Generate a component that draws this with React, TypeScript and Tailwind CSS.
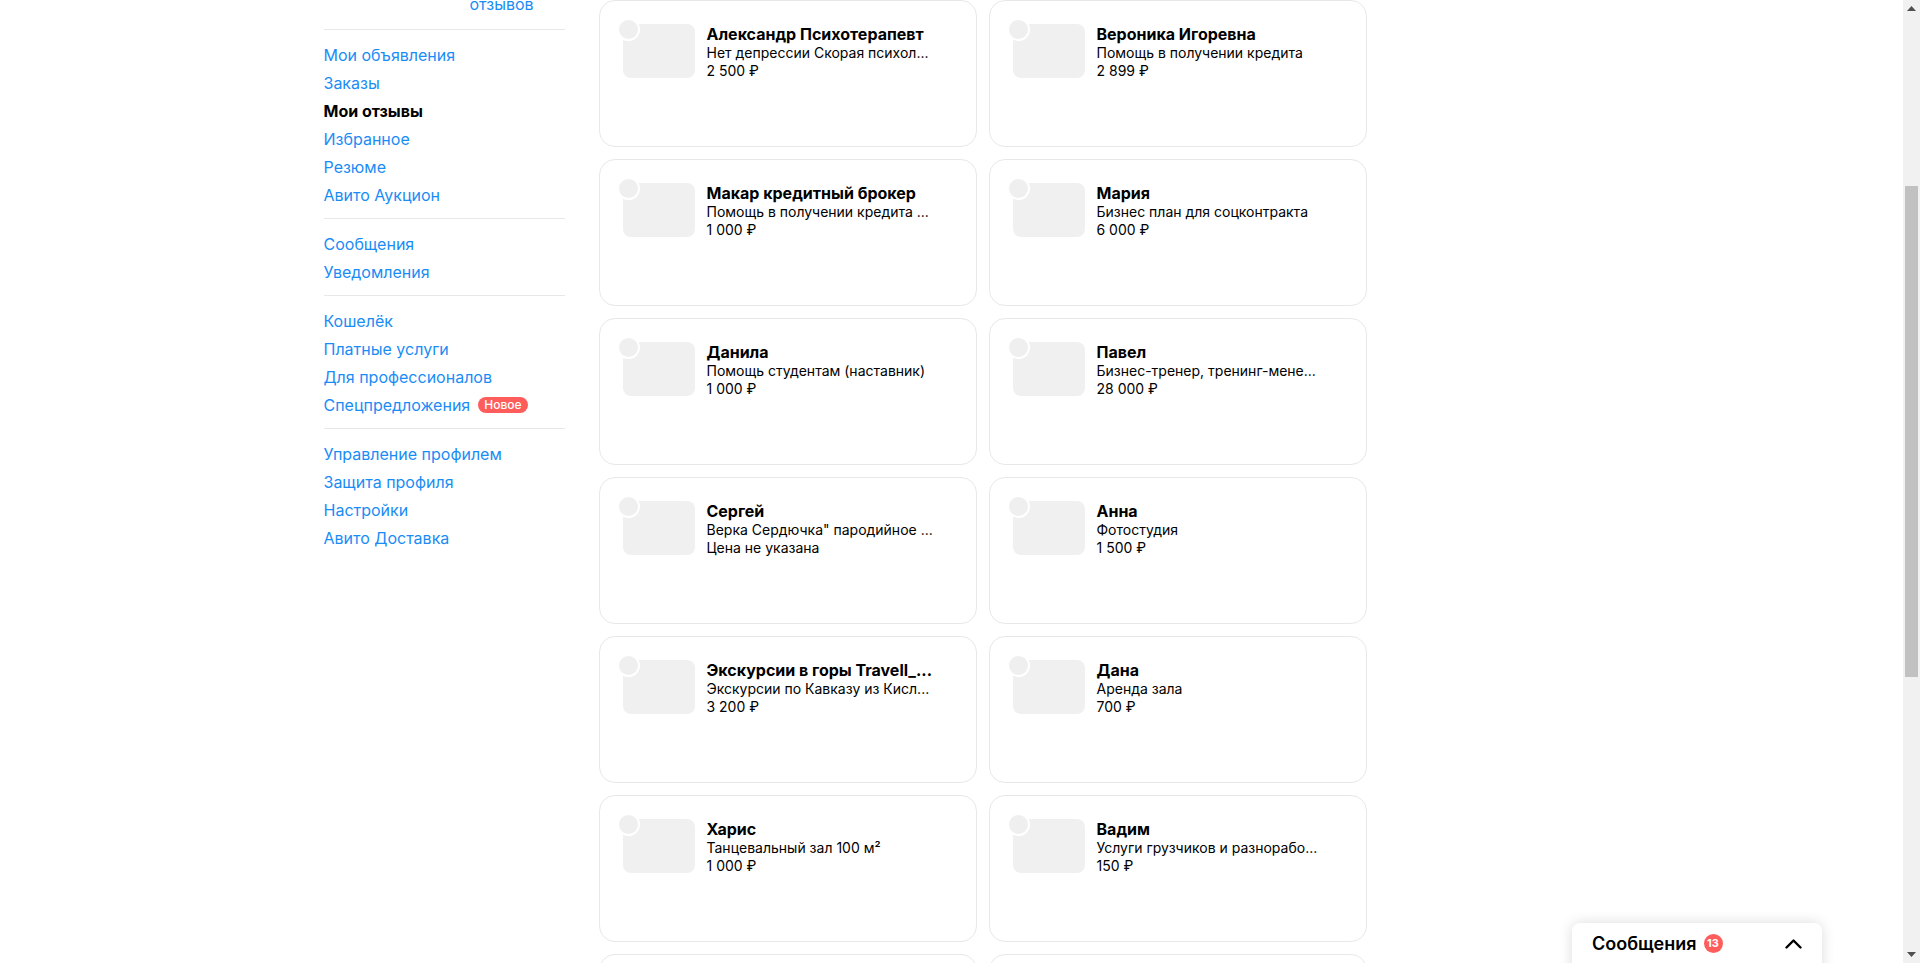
import React from 'react';

type Item = { name: string; desc: string; price: string };

const items: Item[] = [
  { name: 'Александр Психотерапевт', desc: 'Нет депрессии Скорая психол...', price: '2\u00a0500\u00a0₽' },
  { name: 'Вероника Игоревна', desc: 'Помощь в получении кредита', price: '2\u00a0899\u00a0₽' },
  { name: 'Макар кредитный брокер', desc: 'Помощь в получении кредита ...', price: '1\u00a0000\u00a0₽' },
  { name: 'Мария', desc: 'Бизнес план для соцконтракта', price: '6\u00a0000\u00a0₽' },
  { name: 'Данила', desc: 'Помощь студентам (наставник)', price: '1\u00a0000\u00a0₽' },
  { name: 'Павел', desc: 'Бизнес-тренер, тренинг-мене...', price: '28\u00a0000\u00a0₽' },
  { name: 'Сергей', desc: 'Верка Сердючка" пародийное ...', price: 'Цена не указана' },
  { name: 'Анна', desc: 'Фотостудия', price: '1\u00a0500\u00a0₽' },
  { name: 'Экскурсии в горы Travell_...', desc: 'Экскурсии по Кавказу из Кисл...', price: '3\u00a0200\u00a0₽' },
  { name: 'Дана', desc: 'Аренда зала', price: '700\u00a0₽' },
  { name: 'Харис', desc: 'Танцевальный зал 100 м²', price: '1\u00a0000\u00a0₽' },
  { name: 'Вадим', desc: 'Услуги грузчиков и разнорабо...', price: '150\u00a0₽' },
  { name: '', desc: '', price: '' },
  { name: '', desc: '', price: '' },
];

const groups: { label: string; active?: boolean; badge?: string }[][] = [
  [
    { label: 'Мои объявления' },
    { label: 'Заказы' },
    { label: 'Мои отзывы', active: true },
    { label: 'Избранное' },
    { label: 'Резюме' },
    { label: 'Авито Аукцион' },
  ],
  [{ label: 'Сообщения' }, { label: 'Уведомления' }],
  [
    { label: 'Кошелёк' },
    { label: 'Платные услуги' },
    { label: 'Для профессионалов' },
    { label: 'Спецпредложения', badge: 'Новое' },
  ],
  [
    { label: 'Управление профилем' },
    { label: 'Защита профиля' },
    { label: 'Настройки' },
    { label: 'Авито Доставка' },
  ],
];

function Sidebar() {
  return (
    <aside className="w-[241px] shrink-0">
      {/* верх профиля, прокручен за край */}
      <div className="-mt-[6px] flex pb-[15px] text-[16px] leading-5">
        <div className="w-[146px]" />
        <a className="text-[#1a8cf5]">отзывов</a>
      </div>
      {groups.map((g, i) => (
        <div key={i} className="border-t border-[#e8e8e8] pt-[11px] pb-[9px]">
          {g.map((it) => (
            <div key={it.label} className="flex items-center leading-[28px] text-[16px]">
              <span className={it.active ? 'font-bold text-black' : 'text-[#1a8cf5]'}>{it.label}</span>
              {it.badge && (
                <span className="ml-2 rounded-full bg-[#ff5c5c] px-[6px] text-[12px] leading-4 font-medium text-white">
                  {it.badge}
                </span>
              )}
            </div>
          ))}
        </div>
      ))}
    </aside>
  );
}

function Card({ item }: { item: Item }) {
  return (
    <div className="flex h-[147px] gap-3 rounded-[16px] border border-[#e8e8e8] bg-white p-[23px]">
      <div className="relative h-[54px] w-[72px] shrink-0 rounded-[8px] bg-[#f0f0f0]">
        <div className="absolute -left-[6px] -top-[6px] h-[23px] w-[23px] rounded-full border-2 border-white bg-[#efefef]" />
      </div>
      {item.name && (
        <div className="min-w-0 whitespace-nowrap text-black">
          <div className="text-[16px] font-bold leading-5">{item.name}</div>
          <div className="text-[14px] leading-[18px]">{item.desc}</div>
          <div className="text-[14px] leading-[18px]">{item.price}</div>
        </div>
      )}
    </div>
  );
}

function Scrollbar() {
  return (
    <div className="flex h-full w-[17px] shrink-0 flex-col bg-[#f1f1f1]">
      <div className="flex h-[17px] items-center justify-center">
        <svg width="9" height="5" viewBox="0 0 9 5">
          <path d="M0 5 4.5 0 9 5z" fill="#505050" />
        </svg>
      </div>
      <div className="flex-1">
        <div className="mx-[2px] mt-[169px] h-[491px] bg-[#c1c1c1]" />
      </div>
      <div className="flex h-[17px] items-center justify-center">
        <svg width="9" height="5" viewBox="0 0 9 5">
          <path d="M0 0 4.5 5 9 0z" fill="#505050" />
        </svg>
      </div>
    </div>
  );
}

export default function App() {
  return (
    <div className="relative flex h-[963px] w-full overflow-hidden bg-white font-['Inter','Noto_Sans',sans-serif]">
      <main className="flex-1 overflow-hidden">
        <div className="mx-auto flex w-[1256px] items-start">
          <Sidebar />
          <div className="ml-[34px] grid grid-cols-[378px_378px] gap-[12px]">
            {items.map((it, i) => (
              <Card key={i} item={it} />
            ))}
          </div>
        </div>
      </main>
      <Scrollbar />

      {/* плавающее окно сообщений */}
      <div className="absolute left-[1572px] top-[923px] h-[60px] w-[250px] rounded-t-[8px] bg-white shadow-[0_0_14px_rgba(0,0,0,0.14)]">
        <div className="flex h-[41px] items-center px-5">
          <span className="text-[18px] font-semibold text-black">Сообщения</span>
          <span className="ml-[7px] flex h-[19px] w-[19px] items-center justify-center rounded-full bg-[#ff5c5c] text-[11px] font-bold text-white">
            13
          </span>
          <svg className="ml-auto" width="17" height="11" viewBox="0 0 17 11" fill="none">
            <path d="M1.5 9.5 8.5 2.5 15.5 9.5" stroke="#000" strokeWidth="2.4" strokeLinecap="round" strokeLinejoin="round" />
          </svg>
        </div>
      </div>
    </div>
  );
}
